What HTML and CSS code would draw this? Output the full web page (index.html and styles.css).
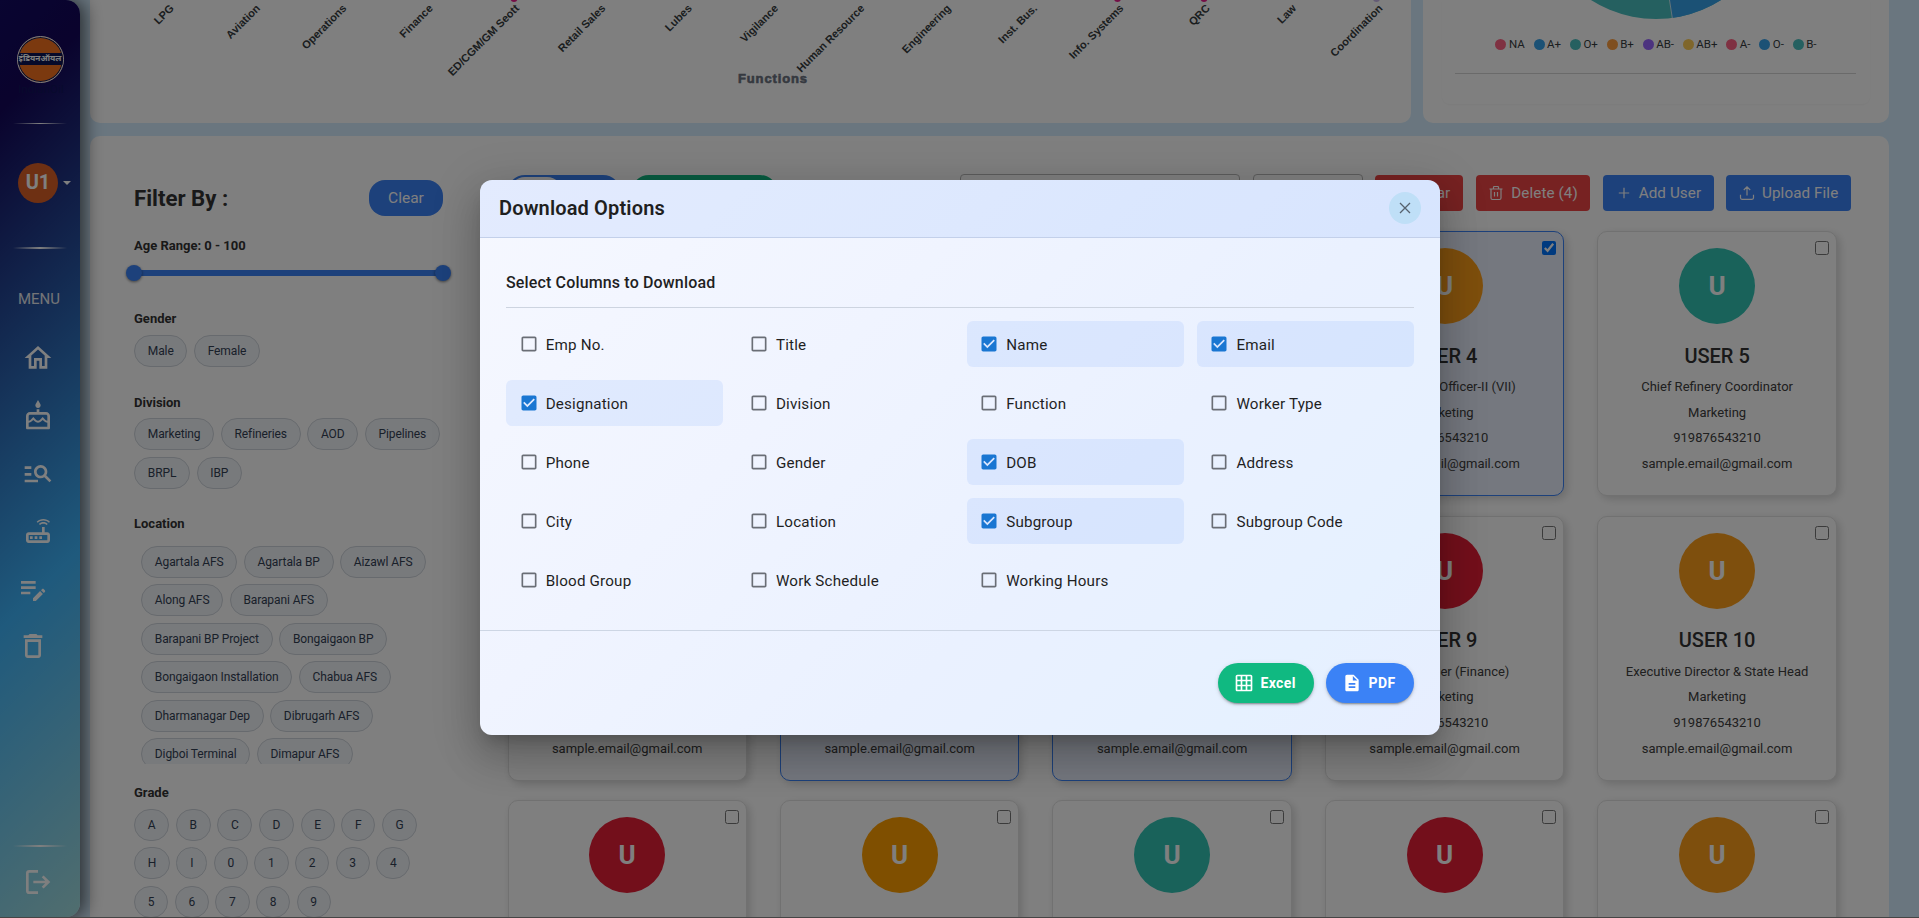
FILE: index.html
```html
<!DOCTYPE html>
<html lang="en">
<head>
<meta charset="utf-8">
<title>User Dashboard</title>
<link rel="stylesheet" href="styles.css">
</head>
<body>
<div class="app">
  <aside class="sidebar">
    <div class="logo">
      <div class="logo-mark"><span class="logo-band">इंडियनऑयल</span></div>
      <span class="logo-name">IndianOil</span>
    </div>
    <hr class="glow glow-a">
    <div class="account"><span class="account-avatar">U1</span><span class="caret"></span></div>
    <hr class="glow glow-b">
    <div class="menu-title">MENU</div>
    <nav class="menu">
      <svg viewBox="0 0 24 24"><path d="M12 5.69l5 4.5V18h-2v-6H9v6H7v-7.81l5-4.5M12 3L2 12h3v8h6v-6h2v6h6v-8h3L12 3z"/></svg>
      <svg viewBox="0 0 24 24"><path d="M12 6c1.11 0 2-.9 2-2 0-.38-.1-.73-.29-1.03L12 0l-1.71 2.97c-.19.3-.29.65-.29 1.03 0 1.1.9 2 2 2zm6 3h-5V7h-2v2H6c-1.66 0-3 1.34-3 3v9c0 .55.45 1 1 1h16c.55 0 1-.45 1-1v-9c0-1.66-1.34-3-3-3zm1 11H5v-3c.9-.01 1.76-.37 2.4-1.01l1.09-1.07 1.07 1.07c1.31 1.31 3.59 1.3 4.89 0l1.08-1.07 1.07 1.07c.64.64 1.5 1 2.4 1.01v3zm0-4.5c-.51-.01-.99-.2-1.35-.57l-2.13-2.13-2.14 2.13c-.74.74-2.03.74-2.77 0L8.48 12.8l-2.14 2.13c-.35.36-.83.56-1.34.57V12c0-.55.45-1 1-1h12c.55 0 1 .45 1 1v3.5z"/></svg>
      <svg viewBox="0 0 24 24"><path d="M7 9H2V7h5v2zm0 3H2v2h5v-2zm13.59 7l-3.83-3.83c-.8.52-1.74.83-2.76.83-2.76 0-5-2.24-5-5s2.24-5 5-5 5 2.24 5 5c0 1.02-.31 1.96-.83 2.75L22 17.59 20.59 19zM17 11c0-1.65-1.35-3-3-3s-3 1.35-3 3 1.35 3 3 3 3-1.35 3-3zM2 19h10v-2H2v2z"/></svg>
      <svg viewBox="0 0 24 24"><path d="M19 13h-2V9h-2v4H5c-1.1 0-2 .9-2 2v4c0 1.1.9 2 2 2h14c1.1 0 2-.9 2-2v-4c0-1.1-.9-2-2-2zm0 6H5v-4h14v4zM6 16h2v2H6zm3.5 0h2v2h-2zm3.5 0h2v2h-2zM20.200 5.900l.8-.8C19.600 3.700 17.800 3 16 3s-3.600.7-5 2.100l.8.8C13 4.800 14.500 4.200 16 4.200s3 .6 4.200 1.700zm-.9.800c-.9-.9-2.100-1.400-3.300-1.400s-2.400.5-3.300 1.400l.8.8c.7-.7 1.600-1 2.500-1s1.800.3 2.500 1l.8-.8z"/></svg>
      <svg class="menu-shift" viewBox="0 0 24 24"><path d="M3 10h11v2H3v-2zm0-2h11V6H3v2zm0 8h7v-2H3v2zm15.010-3.130.71-.71c.39-.39 1.020-.39 1.410 0l.71.71c.39.39.39 1.020 0 1.410l-.71.71-2.120-2.120zm-.71.71-5.300 5.300V21h2.120l5.300-5.300-2.120-2.120z"/></svg>
      <svg class="menu-shift" viewBox="0 0 24 24"><path d="M6 19c0 1.100.9 2 2 2h8c1.100 0 2-.9 2-2V7H6v12zM8 9h8v10H8V9zm7.500-5l-1-1h-5l-1 1H5v2h14V4h-3.500z"/></svg>
    </nav>
    <div class="sidebar-end">
      <hr class="glow">
      <svg viewBox="0 0 24 24" fill="none" stroke="#fff" stroke-width="2"><path d="M12 4H5.500Q4 4 4 5.500v13Q4 20 5.500 20H12M8.500 12H19.500M15.500 7.800L19.800 12l-4.300 4.200"/></svg>
    </div>
  </aside>

  <main class="main">
    <section class="charts">
      <div class="panel chart-panel">
        <svg class="axis" width="1321" height="123">
          <g class="axis-dots"><circle cx="424" cy="-1.500" r="3.500"/><circle cx="1027.500" cy="-1.500" r="3.500"/><circle cx="1114" cy="-1.500" r="3.500"/><circle class="pale" cx="1286.500" cy="-1.500" r="3.500"/></g>
          <g class="axis-labels" transform="translate(5.500 0)">
            <text transform="translate(79 9) rotate(-45)">LPG</text>
            <text transform="translate(165.300 9) rotate(-45)">Aviation</text>
            <text transform="translate(251.700 9) rotate(-45)">Operations</text>
            <text transform="translate(338 9) rotate(-45)">Finance</text>
            <text transform="translate(424.300 9) rotate(-45)">ED/CGM/GM Seott</text>
            <text transform="translate(510.700 9) rotate(-45)">Retail Sales</text>
            <text transform="translate(597 9) rotate(-45)">Lubes</text>
            <text transform="translate(683.300 9) rotate(-45)">Vigilance</text>
            <text transform="translate(769.700 9) rotate(-45)">Human Resource</text>
            <text transform="translate(856 9) rotate(-45)">Engineering</text>
            <text transform="translate(942.300 9) rotate(-45)">Inst. Bus.</text>
            <text transform="translate(1028.700 9) rotate(-45)">Info. Systems</text>
            <text transform="translate(1115 9) rotate(-45)">QRC</text>
            <text transform="translate(1201.300 9) rotate(-45)">Law</text>
            <text transform="translate(1287.700 9) rotate(-45)">Coordination</text>
          </g>
          <text class="axis-title" x="682.500" y="82.500" textLength="69">Functions</text>
        </svg>
      </div>
      <div class="panel pie-panel">
        <div class="pie-box">
          <svg class="pie" width="242" height="19" viewBox="-121 102 242 19"><circle r="121" fill="#4bc0c0"/><path d="M0 0L16 120V121H121V0z" fill="#36a2eb" clip-path="circle(121px at 0 0)"/><path d="M13.500 102L16.300 120" stroke="#fff" stroke-width=".7"/></svg>
          <ul class="legend">
            <li><i class="c-pink"></i>NA</li><li><i class="c-blue"></i>A+</li><li><i class="c-teal"></i>O+</li><li><i class="c-orange"></i>B+</li><li><i class="c-violet"></i>AB-</li><li><i class="c-yellow"></i>AB+</li><li><i class="c-pink"></i>A-</li><li><i class="c-blue"></i>O-</li><li><i class="c-teal"></i>B-</li>
          </ul>
          <hr class="pie-rule">
        </div>
      </div>
    </section>

    <section class="panel users">
      <div class="filters">
        <div class="filters-head"><h2>Filter By :</h2><button class="clear">Clear</button></div>
        <h3 class="age">Age Range: 0 - 100</h3>
        <div class="slider"><i></i><i></i></div>
        <h3 class="gender">Gender</h3>
        <div class="chips"><span>Male</span><span>Female</span></div>
        <h3 class="division">Division</h3>
        <div class="chips"><span>Marketing</span><span>Refineries</span><span>AOD</span><span>Pipelines</span><span>BRPL</span><span>IBP</span></div>
        <h3 class="location">Location</h3>
        <div class="chips chips-scroll"><span>Agartala AFS</span><span>Agartala BP</span><span>Aizawl AFS</span><span>Along AFS</span><span>Barapani AFS</span><span>Barapani BP Project</span><span>Bongaigaon BP</span><span>Bongaigaon Installation</span><span>Chabua AFS</span><span>Dharmanagar Dep</span><span>Dibrugarh AFS</span><span>Digboi Terminal</span><span>Dimapur AFS</span></div>
        <h3 class="grade">Grade</h3>
        <div class="chips"><span>A</span><span>B</span><span>C</span><span>D</span><span>E</span><span>F</span><span>G</span><span>H</span><span>I</span><span>0</span><span>1</span><span>2</span><span>3</span><span>4</span><span>5</span><span>6</span><span>7</span><span>8</span><span>9</span></div>
      </div>

      <div class="results">
        <div class="toolbar">
          <span class="toggle"><i></i></span>
          <button class="download"></button>
          <span class="field search"></span>
          <span class="field select"></span>
          <button class="btn red btn-clear">Clear</button>
          <button class="btn red"><svg width="16" height="16" viewBox="0 0 16 16"><path d="M1.500 4H14.500M5.500 3.800V2.300Q5.500 1.500 6.300 1.500h3.400q.8 0 .8.800v1.500M3 4v9q0 1.500 1.500 1.500h7q1.500 0 1.500-1.500V4M6.500 7v4.500M9.500 7v4.500"/></svg>Delete (4)</button>
          <button class="btn blue btn-add"><svg width="16" height="16" viewBox="0 0 16 16"><path d="M8 2.800v10.400M2.800 8h10.400"/></svg>Add User</button>
          <button class="btn blue"><svg width="16" height="16" viewBox="0 0 16 16"><path d="M8 10.500V2M4.800 5L8 1.800 11.200 5M1.500 9.800v3q0 1.500 1.500 1.500h10q1.500 0 1.500-1.500v-3"/></svg>Upload File</button>
        </div>
        <div class="cards">
          <article class="card"><input type="checkbox"><b class="red">U</b><h4>USER 1</h4><p>Manager</p><p>Marketing</p><p>919876543210</p><p>sample.email@gmail.com</p></article>
          <article class="card"><input type="checkbox"><b class="teal">U</b><h4>USER 2</h4><p>Manager</p><p>Marketing</p><p>919876543210</p><p>sample.email@gmail.com</p></article>
          <article class="card"><input type="checkbox"><b class="amber">U</b><h4>USER 3</h4><p>Manager</p><p>Marketing</p><p>919876543210</p><p>sample.email@gmail.com</p></article>
          <article class="card picked"><input type="checkbox" checked><b class="orange">U</b><h4>USER 4</h4><p>Secretariat Officer-II (VII)</p><p>Marketing</p><p>919876543210</p><p>sample.email@gmail.com</p></article>
          <article class="card"><input type="checkbox"><b class="teal">U</b><h4>USER 5</h4><p>Chief Refinery Coordinator</p><p>Marketing</p><p>919876543210</p><p>sample.email@gmail.com</p></article>
          <article class="card"><input type="checkbox"><b class="teal">U</b><h4>USER 6</h4><p>Manager</p><p>Marketing</p><p>919876543210</p><p>sample.email@gmail.com</p></article>
          <article class="card picked"><input type="checkbox" checked><b class="red">U</b><h4>USER 7</h4><p>Manager</p><p>Marketing</p><p>919876543210</p><p>sample.email@gmail.com</p></article>
          <article class="card picked"><input type="checkbox" checked><b class="amber">U</b><h4>USER 8</h4><p>Manager</p><p>Marketing</p><p>919876543210</p><p>sample.email@gmail.com</p></article>
          <article class="card"><input type="checkbox"><b class="red">U</b><h4>USER 9</h4><p>Dy. Manager (Finance)</p><p>Marketing</p><p>919876543210</p><p>sample.email@gmail.com</p></article>
          <article class="card"><input type="checkbox"><b class="orange">U</b><h4>USER 10</h4><p>Executive Director &amp; State Head</p><p>Marketing</p><p>919876543210</p><p>sample.email@gmail.com</p></article>
          <article class="card"><input type="checkbox"><b class="red">U</b></article>
          <article class="card"><input type="checkbox"><b class="amber">U</b></article>
          <article class="card"><input type="checkbox"><b class="teal">U</b></article>
          <article class="card"><input type="checkbox"><b class="red">U</b></article>
          <article class="card"><input type="checkbox"><b class="orange">U</b></article>
        </div>
      </div>
    </section>
  </main>
</div>

<svg class="defs" width="0" height="0">
  <symbol id="off" viewBox="0 0 24 24"><path d="M19 5v14H5V5h14m0-2H5c-1.100 0-2 .9-2 2v14c0 1.100.9 2 2 2h14c1.100 0 2-.9 2-2V5c0-1.100-.9-2-2-2z"/></symbol>
  <symbol id="on" viewBox="0 0 24 24"><path d="M19 3H5c-1.110 0-2 .9-2 2v14c0 1.100.89 2 2 2h14c1.110 0 2-.9 2-2V5c0-1.100-.89-2-2-2zm-9 14l-5-5 1.410-1.410L10 14.170l7.590-7.590L19 8l-9 9z"/></symbol>
</svg>

<div class="backdrop">
  <div class="modal" role="dialog">
    <header class="modal-head">
      <h2>Download Options</h2>
      <button class="close"><svg width="12" height="12" viewBox="0 0 12 12"><path d="M1 1l10 10M11 1L1 11"/></svg></button>
    </header>
    <div class="modal-body">
      <h3>Select Columns to Download</h3>
      <div class="options">
        <label><svg><use href="#off"/></svg>Emp No.</label>
        <label><svg><use href="#off"/></svg>Title</label>
        <label class="on"><svg><use href="#on"/></svg>Name</label>
        <label class="on"><svg><use href="#on"/></svg>Email</label>
        <label class="on"><svg><use href="#on"/></svg>Designation</label>
        <label><svg><use href="#off"/></svg>Division</label>
        <label><svg><use href="#off"/></svg>Function</label>
        <label><svg><use href="#off"/></svg>Worker Type</label>
        <label><svg><use href="#off"/></svg>Phone</label>
        <label><svg><use href="#off"/></svg>Gender</label>
        <label class="on"><svg><use href="#on"/></svg>DOB</label>
        <label><svg><use href="#off"/></svg>Address</label>
        <label><svg><use href="#off"/></svg>City</label>
        <label><svg><use href="#off"/></svg>Location</label>
        <label class="on"><svg><use href="#on"/></svg>Subgroup</label>
        <label><svg><use href="#off"/></svg>Subgroup Code</label>
        <label><svg><use href="#off"/></svg>Blood Group</label>
        <label><svg><use href="#off"/></svg>Work Schedule</label>
        <label><svg><use href="#off"/></svg>Working Hours</label>
      </div>
    </div>
    <footer class="modal-foot">
      <button class="excel"><svg viewBox="0 0 24 24"><path d="M20 2H4c-1.100 0-2 .9-2 2v16c0 1.100.9 2 2 2h16c1.100 0 2-.9 2-2V4c0-1.100-.9-2-2-2zM8 20H4v-4h4v4zm0-6H4v-4h4v4zm0-6H4V4h4v4zm6 12h-4v-4h4v4zm0-6h-4v-4h4v4zm0-6h-4V4h4v4zm6 12h-4v-4h4v4zm0-6h-4v-4h4v4zm0-6h-4V4h4v4z"/></svg>Excel</button>
      <button class="pdf"><svg viewBox="0 0 24 24"><path d="M14 2H6c-1.100 0-1.990.9-1.990 2L4 20c0 1.100.89 2 1.990 2H18c1.100 0 2-.9 2-2V8l-6-6zm2 16H8v-2h8v2zm0-4H8v-2h8v2zm-3-5V3.500L18.500 9H13z"/></svg>PDF</button>
    </footer>
  </div>
</div>
</body>
</html>
```

FILE: styles.css
```css
* { box-sizing: border-box; margin: 0; padding: 0; }
html, body { height: 918px; overflow: hidden; }
body { background: #454545; font-family: Roboto, "Liberation Sans", sans-serif; color: #333; }
button { border: 0; font: inherit; color: #fff; }
svg { display: block; flex: none; }
.defs { position: absolute; }

.app { height: 917px; display: flex; background: #d4edff; overflow: hidden; }

/* Sidebar */
.sidebar {
  width: 80px; height: 917px; flex: none; display: flex; flex-direction: column;
  border-radius: 0 14px 14px 0; position: relative; z-index: 1;
  background: linear-gradient(135deg, #120a62 0%, #14065a 11%, #3eb4fa 63%, #a2dcde 100%);
  box-shadow: 5px 0 18px rgba(0, 0, 0, .6);
}
.logo { margin-top: 36px; display: flex; flex-direction: column; align-items: center; height: 60px; }
.logo-mark {
  width: 47px; height: 47px; border-radius: 50%; border: 1.500px solid #fff; padding-top: 16px;
  background: #f6731e; box-shadow: inset 0 0 0 1px #10205c; overflow: hidden;
}
.logo-band { display: flex; justify-content: center; align-items: center; height: 12px; background: #0c1454; color: #fff; font: bold 8.300px/12px "Noto Sans Devanagari", "Noto Sans", sans-serif; white-space: nowrap; }
.logo-name { font-size: 11.500px; line-height: 12px; color: #10145a; letter-spacing: .1px; padding-left: 2px; }
.glow { border: 0; height: 2px; width: 54px; margin-left: 13px; flex: none; background: linear-gradient(90deg, transparent, #fff, transparent); }
.glow-a { height: 1px; margin-top: 27px; }
.account { margin-top: 39px; padding-left: 18px; display: flex; align-items: center; gap: 5px; height: 40px; }
.account-avatar { width: 40px; height: 40px; border-radius: 50%; background: #dc6026; color: #fff; font: bold 20px/39px Roboto, sans-serif; text-align: center; }
.caret { border: 4px solid transparent; border-top-color: #fff; border-bottom: 0; }
.glow-b { margin-top: 44px; }
.menu-title { margin-top: 40px; padding-left: 18px; font-size: 15px; line-height: 20px; color: #e6e9ee; }
.menu { margin-top: 33px; display: flex; flex-direction: column; gap: 25.700px; padding-left: 22px; }
.menu svg { width: 32px; height: 32px; fill: #fff; }
.menu .menu-shift { margin-left: -5px; }
.sidebar-end { margin-top: auto; height: 72px; }
.sidebar-end svg { width: 32px; height: 32px; margin: 19px 0 0 22px; }

/* Layout */
.main { flex: 1; padding: 0 30px 0 10px; display: flex; flex-direction: column; gap: 13px; }
.panel { background: #fff; }
.charts { display: flex; gap: 12px; height: 123px; flex: none; }
.chart-panel { width: 1321px; border-radius: 0 0 10px 10px; overflow: hidden; }
.axis-labels text { font: bold 11px "Liberation Sans", Arial, sans-serif; text-anchor: end; fill: #373d3f; }
.axis-title { font: bold 13px "Liberation Sans", Arial, sans-serif; text-anchor: middle; fill: #6b7280; stroke: #6b7280; stroke-width: .6px; }
.axis-dots { fill: #e91e8c; }
.axis-dots .pale { fill: #c9b6ea; }
.pie-panel { flex: 1; border-radius: 0 0 10px 10px; padding: 0 19px; }
.pie-box { height: 104px; border-radius: 0 0 8px 8px; box-shadow: 0 1px 2px rgba(0, 0, 0, .04); }
.pie { margin: 0 auto; }
.legend { display: flex; justify-content: center; gap: 8.800px; list-style: none; margin-top: 17.500px; font-size: 11.500px; line-height: 15px; color: #373d3f; }
.legend li { display: flex; align-items: center; gap: 2.500px; }
.legend i { width: 11px; height: 11px; border-radius: 50%; }
.c-pink { background: #ff6384; }
.c-blue { background: #36a2eb; }
.c-teal { background: #4bc0c0; }
.c-orange { background: #ff9f40; }
.c-violet { background: #9966ff; }
.c-yellow { background: #ffcd56; }
.pie-rule { border: 0; height: 1px; background: #d4d4d4; margin: 21.500px 14px 0 13px; }

.users { flex: none; height: 900px; border-radius: 10px 10px 0 0; padding: 38px 38px 0 44px; display: flex; }

/* Filters */
.filters { width: 309px; flex: none; padding-top: 6px; }
.filters-head { display: flex; justify-content: space-between; align-items: center; height: 36px; }
.filters-head h2 { font-size: 22.200px; font-weight: 700; white-space: pre; }
.clear { width: 74px; height: 36px; border-radius: 16px; background: #3b82f6; font-size: 15.500px; }
.filters h3 { font-size: 13px; line-height: 16px; font-weight: 700; padding-top: 1px; margin-bottom: -1px; }
.filters h3.age { margin-top: 21px; }
.slider { height: 6px; margin-top: 17px; background: #3b82f6; display: flex; justify-content: space-between; align-items: center; }
.slider i { width: 16px; height: 16px; margin: 0 -8px; border-radius: 50%; background: #3b82f6; box-shadow: 0 1px 3px rgba(0, 0, 0, .5); }
.filters h3.gender { margin-top: 34px; }
.filters h3.division { margin-top: 27px; }
.filters h3.location { margin-top: 26px; }
.filters h3.grade { margin-top: 20px; }
.chips { display: flex; flex-wrap: wrap; gap: 6.500px 6.400px; padding-top: 9px; }
.division + .chips { padding-top: 8px; }
.chips span { height: 32px; padding: 0 12.800px; border: 1px solid #cfd5dc; border-radius: 16px; background: #f1f4f8; font-size: 12px; line-height: 30px; letter-spacing: -.1px; color: #334155; }
.chips-scroll { padding: 15px 0 0 7px; height: 233px; overflow: hidden; align-content: flex-start; }

/* Results */
.results { flex: 1; margin-left: 64px; }
.toolbar { display: flex; align-items: center; height: 37px; gap: 12.500px; }
.toggle { width: 114px; height: 36px; flex: none; border-radius: 18px; background: #3b82f6; padding: 2px; margin-right: -3px; margin-top: 1px; }
.toggle i { display: block; width: 54px; height: 32px; border-radius: 16px; background: #fff; }
.download { width: 147px; height: 36px; flex: none; border-radius: 18px; background: #10b981; margin-top: 1px; }
.field { height: 37px; flex: none; border: 1px solid #b9b9b9; border-radius: 4px; }
.search { width: 280px; margin-left: auto; }
.select { width: 110px; }
.btn { height: 36px; margin-top: 1px; flex: none; border-radius: 4px; padding: 0 12.700px; display: flex; align-items: center; gap: 7px; font-size: 15.200px; letter-spacing: .1px; white-space: nowrap; }
.btn svg { fill: none; stroke: #fff; stroke-width: 1.200; }
.btn.red { background: #ef4444; }
.btn.blue { background: #3b82f6; }
.btn-clear { width: 88px; justify-content: flex-end; }

.cards { display: grid; grid-template-columns: repeat(5, 239.300px); column-gap: 33.200px; row-gap: 19.600px; margin: 20px 0 0 .500px; }
.card { position: relative; height: 265px; border: 1px solid #e2e2e2; border-radius: 10px; background: #fff; box-shadow: 3px 3px 8px rgba(0, 0, 0, .16); display: flex; flex-direction: column; align-items: center; padding-top: 16px; }
.card.picked { background: #ebf1ff; border-color: #3b82f6; }
.card input { position: absolute; top: 9px; right: 7px; width: 14px; height: 14px; }
.card b { width: 76px; height: 76px; border-radius: 50%; color: #fff; font-size: 26px; line-height: 76px; text-align: center; }
.card b.red { background: #e61e37; }
.card b.teal { background: #32c4b5; }
.card b.orange { background: #fd9f1b; }
.card b.amber { background: #ff9f00; }
.card h4 { margin: 18.500px 0 10.500px; font-size: 20px; line-height: 26px; font-weight: 500; }
.card p { font-size: 13px; line-height: 15px; margin-bottom: 10.700px; color: #404040; }

/* Modal */
.backdrop { position: absolute; left: 0; top: 0; width: 1919px; height: 917px; z-index: 2; background: rgba(0, 0, 0, .5); display: flex; justify-content: center; padding: 180px 0 0 1px; }
.modal {
  width: 960px; height: 555px; border-radius: 12px; overflow: hidden; color: #1f1f1f;
  background: linear-gradient(135deg, #f6f8ff 0%, #f0f4ff 35%, #eaf1ff 62%, #e6f1ff 85%, #e7eeff 100%);
  box-shadow: 0 11px 15px -7px rgba(0, 0, 0, .2), 0 24px 38px 3px rgba(0, 0, 0, .14), 0 9px 46px 8px rgba(0, 0, 0, .12);
}
.modal-head { height: 58px; padding: 0 19px; display: flex; align-items: center; justify-content: space-between; background: rgba(59, 130, 246, .1); border-bottom: 1px solid #c3d0ea; }
.modal-head h2 { font-size: 20px; font-weight: 600; letter-spacing: .15px; padding-bottom: 1px; }
.close { width: 32px; height: 32px; border-radius: 50%; background: #bfdff7; display: flex; align-items: center; justify-content: center; margin-top: -1px; }
.close svg { fill: none; stroke: #56626e; stroke-width: 1.300; }
.modal-body { height: 392px; padding: 32px 26px 0; }
.modal-body h3 { height: 38px; font-size: 16px; line-height: 25px; font-weight: 500; letter-spacing: .15px; border-bottom: 1px solid #cdd4e0; }
.options { display: grid; grid-template-columns: repeat(4, 1fr); grid-auto-rows: 46.200px; gap: 12.800px 13px; margin-top: 13px; }
.options label { display: flex; align-items: center; gap: 7px; padding: 2px 0 0 12.700px; border-radius: 6px; font-size: 15.200px; letter-spacing: .18px; }
.options svg { width: 20px; height: 20px; margin-top: -2px; fill: #6a6e76; }
.options .on { background: rgba(59, 130, 246, .1); }
.options .on svg { fill: #1976d2; }
.modal-foot { height: 105px; border-top: 1px solid #cdd6e4; padding: 32px 26px 0; display: flex; justify-content: flex-end; gap: 12px; }
.modal-foot button { height: 40px; border-radius: 20px; padding: 1px 18.500px 0 15.500px; display: flex; align-items: center; gap: 6.700px; font-size: 14px; line-height: 20px; font-weight: 700; letter-spacing: .4px; box-shadow: 0 3px 1px -2px rgba(0, 0, 0, .2), 0 2px 2px rgba(0, 0, 0, .14), 0 1px 5px rgba(0, 0, 0, .12); }
.modal-foot .excel, .modal-foot .pdf { padding-top: 0; padding-bottom: 1px; }
.modal-foot svg { width: 20px; height: 20px; margin-top: 1px; fill: #fff; }
.excel { background: #10b981; }
.pdf { background: #3b82f6; }
```
